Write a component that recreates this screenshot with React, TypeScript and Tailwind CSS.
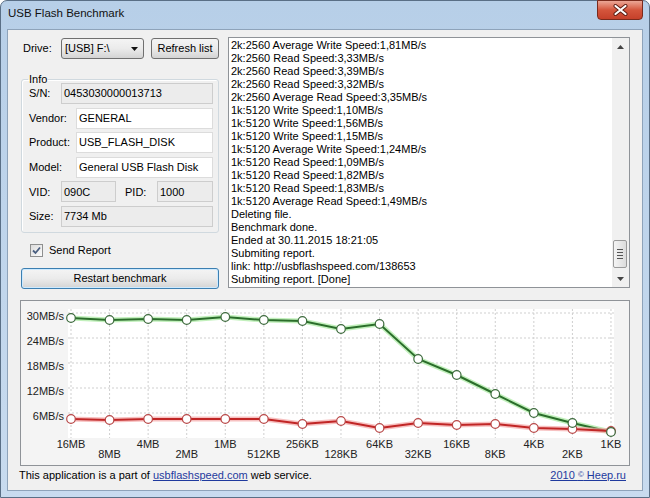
import React from 'react';

const sizes = ['16MB', '8MB', '4MB', '2MB', '1MB', '512KB', '256KB', '128KB', '64KB', '32KB', '16KB', '8KB', '4KB', '2KB', '1KB'];
const writeY = [317, 319, 318, 319, 316, 319, 320, 328, 323, 358, 374, 393, 412, 422, 431];
const readY = [418, 419, 418, 418, 418, 418, 423, 420, 427, 422, 424, 423, 427, 428, 430];
const xAt = (i: number) => 71 + i * 38.57;

const logLines = [
  '2k:2560 Average Write Speed:1,81MB/s',
  '2k:2560 Read Speed:3,33MB/s',
  '2k:2560 Read Speed:3,39MB/s',
  '2k:2560 Read Speed:3,32MB/s',
  '2k:2560 Average Read Speed:3,35MB/s',
  '1k:5120 Write Speed:1,10MB/s',
  '1k:5120 Write Speed:1,56MB/s',
  '1k:5120 Write Speed:1,15MB/s',
  '1k:5120 Average Write Speed:1,24MB/s',
  '1k:5120 Read Speed:1,09MB/s',
  '1k:5120 Read Speed:1,82MB/s',
  '1k:5120 Read Speed:1,83MB/s',
  '1k:5120 Average Read Speed:1,49MB/s',
  'Deleting file.',
  'Benchmark done.',
  'Ended at 30.11.2015 18:21:05',
  'Submiting report.',
  'link: http://usbflashspeed.com/138653',
  'Submiting report. [Done]',
];

const btnFace = 'flex items-center rounded-[3px] border bg-linear-to-b from-[#f4f4f4] via-[#ebebeb] to-[#d4d4d4]';

function Field({ value, readOnly, className }: { value: string; readOnly?: boolean; className?: string }) {
  return (
    <div
      className={`flex h-full items-center border pl-[2px] ${
        readOnly ? 'border-[#cdcdcd] bg-[#ececec]' : 'border-[#dcdcdc] bg-white'
      } ${className ?? ''}`}
    >
      {value}
    </div>
  );
}

function Chart() {
  const writePts = writeY.map((y, i) => `${xAt(i)},${y}`).join(' ');
  const readPts = readY.map((y, i) => `${xAt(i)},${y}`).join(' ');
  const gridY = [312, 337, 362, 387, 412];
  const yLabels = ['30MB/s', '24MB/s', '18MB/s', '12MB/s', '6MB/s'];
  return (
    <svg width="608" height="164" viewBox="21 300 608 164" className="block">
      <rect x="21" y="300" width="608" height="164" fill="#f4f4f4" />
      <rect x="68" y="308" width="546" height="129" fill="#ffffff" />
      {sizes.map((_, i) => (
        <line key={i} x1={xAt(i)} y1="308" x2={xAt(i)} y2="437" stroke="#cfcfcf" strokeDasharray="2 2" />
      ))}
      {gridY.map((y) => (
        <line key={y} x1="68" y1={y} x2="614" y2={y} stroke="#cfcfcf" strokeDasharray="2 2" />
      ))}
      {yLabels.map((l, i) => (
        <text key={l} x="64" y={gridY[i] + 7} textAnchor="end" fontSize="11" fill="#222">
          {l}
        </text>
      ))}
      {sizes.map((s, i) => (
        <text key={s} x={xAt(i)} y={i % 2 === 0 ? 447 : 457} textAnchor="middle" fontSize="11" fill="#222">
          {s}
        </text>
      ))}
      <polyline points={writePts} fill="none" stroke="#a8eaa0" strokeWidth="5" strokeOpacity="0.7" />
      <polyline points={writePts} fill="none" stroke="#2b6e2b" strokeWidth="2" />
      <polyline points={readPts} fill="none" stroke="#f4a6a6" strokeWidth="5" strokeOpacity="0.7" />
      <polyline points={readPts} fill="none" stroke="#c12626" strokeWidth="2" />
      {readY.map((y, i) => (
        <circle key={`r${i}`} cx={xAt(i)} cy={y} r="4.3" fill="#fff" stroke="#b84848" strokeWidth="1.2" />
      ))}
      {writeY.map((y, i) => (
        <circle key={`w${i}`} cx={xAt(i)} cy={y} r="4.3" fill="#fff" stroke="#3d6a3d" strokeWidth="1.2" />
      ))}
    </svg>
  );
}

export default function App() {
  return (
    <div className="flex h-[498px] w-[650px] flex-col rounded-t-[7px] border border-[#5a6f86] bg-linear-to-b from-[#b7cfe8] to-[#c8dbef] px-[6px] pb-[6px] font-['Liberation_Sans',Arial,sans-serif] text-[11px] text-black">
      {/* title bar */}
      <div className="flex h-[28px] justify-between">
        <div className="self-center pb-[2px] pl-[1px] text-[11.5px] text-[#111]">USB Flash Benchmark</div>
        <div className="-mt-px flex h-[20px] w-[46px] items-center justify-center self-start rounded-b-[4px] border border-[#7a2a1c] bg-linear-to-b from-[#eba696] via-[#d4553c] to-[#c5402a]">
          <svg width="15" height="12" viewBox="0 0 15 12">
            <path d="M2.5 2 L12.5 10 M12.5 2 L2.5 10" stroke="#5a1a10" strokeWidth="4" strokeLinecap="round" />
            <path d="M2.5 2 L12.5 10 M12.5 2 L2.5 10" stroke="#ffffff" strokeWidth="2.2" strokeLinecap="round" />
          </svg>
        </div>
      </div>

      {/* client area */}
      <div className="flex h-[462px] w-[636px] flex-col border border-[#8ea3ba] bg-[#f0f0f0] pl-[13px] pr-[12px] pt-[7px]">
        <div className="flex">
          {/* left column */}
          <div className="flex w-[198px] flex-col">
            <div className="mt-[1px] flex h-[21px] items-center">
              <span className="ml-[2px] w-[38px]">Drive:</span>
              <div className={`${btnFace} h-full w-[83px] justify-between border-[#707070] pl-[3px] pr-[5px]`}>
                <span>[USB] F:\</span>
                <svg width="7" height="4" viewBox="0 0 7 4">
                  <path d="M0 0 H7 L3.5 4 Z" fill="#111" />
                </svg>
              </div>
              <div className={`${btnFace} ml-[7px] h-full w-[68px] justify-center border-[#707070]`}>Refresh list</div>
            </div>

            <fieldset className="mt-[14px] rounded-[3px] border border-[#d0d9df] pb-[5px] pl-[7px] pr-[5px] shadow-[inset_1px_1px_0_#fff]">
              <legend className="-ml-[1px] px-[1px] leading-[13px]">Info</legend>
              <div className="-mt-[3px] flex flex-col gap-[3.6px]">
                <div className="flex h-[21px] items-center">
                  <span className="w-[32px]">S/N:</span>
                  <Field value="0453030000013713" readOnly className="flex-1" />
                </div>
                <div className="flex h-[21px] items-center">
                  <span className="w-[47px]">Vendor:</span>
                  <Field value="GENERAL" className="flex-1" />
                </div>
                <div className="flex h-[21px] items-center">
                  <span className="w-[47px]">Product:</span>
                  <Field value="USB_FLASH_DISK" className="flex-1" />
                </div>
                <div className="flex h-[21px] items-center">
                  <span className="w-[47px]">Model:</span>
                  <Field value="General USB Flash Disk" className="flex-1" />
                </div>
                <div className="flex h-[21px] items-center">
                  <span className="w-[32px]">VID:</span>
                  <Field value="090C" readOnly className="w-[55px]" />
                  <span className="ml-[9px] w-[32px]">PID:</span>
                  <Field value="1000" readOnly className="flex-1" />
                </div>
                <div className="flex h-[21px] items-center">
                  <span className="w-[32px]">Size:</span>
                  <Field value="7734 Mb" readOnly className="flex-1" />
                </div>
              </div>
            </fieldset>

            <div className="ml-[9px] mt-[11px] flex h-[13px] items-center">
              <div className="flex h-[13px] w-[13px] items-center justify-center border border-[#8e8f8f] bg-linear-to-br from-[#dcdcdc] to-[#fbfbfb]">
                <svg width="9" height="9" viewBox="0 0 9 9">
                  <path d="M1 4.5 L3.5 7 L8 1.5" fill="none" stroke="#4a5f80" strokeWidth="1.8" />
                </svg>
              </div>
              <span className="ml-[6px]">Send Report</span>
            </div>

            <div className={`${btnFace} mt-[11px] h-[21px] justify-center border-[#3c7fb1] from-[#eaf6fd] via-[#e0eef8] to-[#c4dff2] shadow-[inset_0_0_0_1px_#cdeaff]`}>
              Restart benchmark
            </div>
          </div>

          {/* log box */}
          <div className="ml-[9px] flex h-[251px] w-[402px] border border-[#8f9398] bg-white">
            <div className="flex-1 overflow-hidden pl-[2px] pt-[1px] leading-[13px]">
              {logLines.map((l, i) => (
                <div key={i} className="whitespace-nowrap">
                  {l}
                </div>
              ))}
            </div>
            <div className="flex w-[17px] flex-col bg-[#f0f0f0]">
              <div className="flex h-[17px] items-center justify-center">
                <svg width="7" height="4" viewBox="0 0 7 4">
                  <path d="M0 4 H7 L3.5 0 Z" fill="#444" />
                </svg>
              </div>
              <div className="flex-1">
                <div className="ml-[1px] mt-[185px] flex h-[28px] w-[14px] flex-col items-center justify-center gap-[2px] rounded-[2px] border border-[#9a9a9a] bg-linear-to-r from-[#f4f4f4] to-[#dcdcdc]">
                  <div className="h-px w-[6px] bg-[#555]" />
                  <div className="h-px w-[6px] bg-[#555]" />
                  <div className="h-px w-[6px] bg-[#555]" />
                  <div className="h-px w-[6px] bg-[#555]" />
                </div>
              </div>
              <div className="flex h-[17px] items-center justify-center">
                <svg width="7" height="4" viewBox="0 0 7 4">
                  <path d="M0 0 H7 L3.5 4 Z" fill="#444" />
                </svg>
              </div>
            </div>
          </div>
        </div>

        {/* chart */}
        <div className="-ml-[1px] mt-[11px] h-[166px] w-[610px] border border-[#8f9398]">
          <Chart />
        </div>

        {/* footer */}
        <div className="-ml-[2px] mr-[4px] mt-[3px] flex h-[13px] items-center justify-between leading-[13px]">
          <span>
            This application is a part of{' '}
            <span className="text-[#1f3a9e] underline">usbflashspeed.com</span> web service.
          </span>
          <span className="text-[#1f3a9e] underline">
            2010 <span className="align-[2px] text-[8px]">©</span> Heep.ru
          </span>
        </div>
      </div>
    </div>
  );
}
